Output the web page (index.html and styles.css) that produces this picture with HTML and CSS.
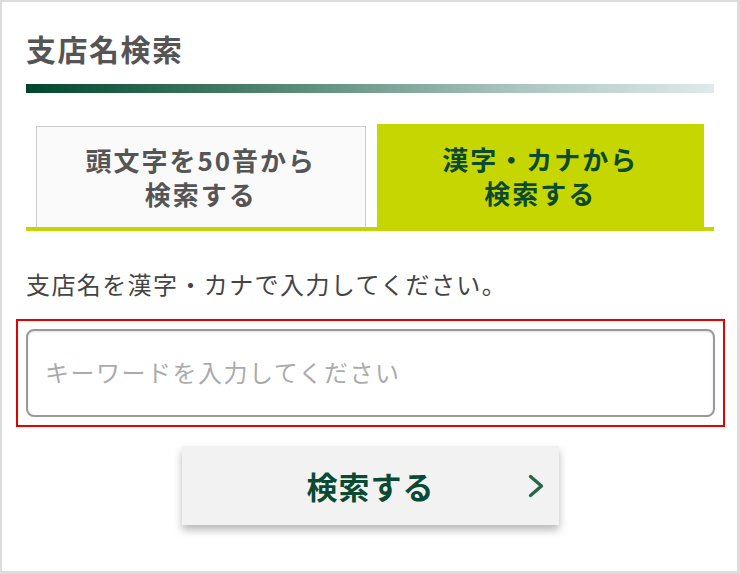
FILE: index.html
```html
<!DOCTYPE html>
<html lang="ja">
<head>
<meta charset="utf-8">
<title>支店名検索</title>
<link rel="stylesheet" href="styles.css">
</head>
<body>
<div class="frame">
  <h1 class="title">支店名検索</h1>
  <div class="title-bar"></div>

  <div class="tabs">
    <div class="tab tab-off">頭文字を50音から<br>検索する</div>
    <div class="tab tab-on">漢字・カナから<br>検索する</div>
  </div>

  <p class="lead">支店名を漢字・カナで入力してください。</p>

  <div class="field-box">
    <input class="field" type="text" placeholder="キーワードを入力してください">
  </div>

  <div class="btn-row">
    <button class="btn" type="button">
      <span class="btn-spacer"></span>
      <span class="btn-label">検索する</span>
      <svg class="btn-chevron" width="16" height="24" viewBox="0 0 16 24" aria-hidden="true">
        <polyline points="2.5,2.5 13.5,12 2.5,21.5" fill="none" stroke="#2b6548" stroke-width="3.4" stroke-linecap="round" stroke-linejoin="round"/>
      </svg>
    </button>
  </div>
</div>
</body>
</html>
```

FILE: styles.css
```css
* {
  box-sizing: border-box;
}

html, body {
  margin: 0;
  padding: 0;
  background: #ffffff;
}

body {
  font-family: "Noto Sans CJK JP", "Noto Sans", sans-serif;
}

.frame {
  width: 740px;
  height: 574px;
  border-style: solid;
  border-color: #dcdcdc;
  border-width: 2px 3px 3px 2px;
  padding: 26px 23px 0 24px;
  overflow: hidden;
}

.title {
  margin: 0;
  font-size: 30px;
  line-height: 40px;
  font-weight: 700;
  letter-spacing: 1.5px;
  color: #555555;
}

.title-bar {
  margin-top: 16px;
  height: 9px;
  background: linear-gradient(to right, #00462c 0%, #4f8470 35%, #a8c3bd 70%, #dfeaea 100%);
}

.tabs {
  margin-top: 31px;
  display: flex;
  align-items: flex-end;
  gap: 11px;
  padding: 0 10px;
  border-bottom: 4px solid #c5d500;
}

.tab {
  flex: 1 1 0;
  display: flex;
  align-items: center;
  justify-content: center;
  text-align: center;
  font-size: 26px;
  line-height: 34px;
  font-weight: 700;
  letter-spacing: 2px;
}

.tab-off {
  height: 101px;
  background: #fafafa;
  border: 1px solid #cccccc;
  border-bottom: none;
  color: #555555;
}

.tab-on {
  height: 103px;
  background: #c5d600;
  color: #0b4a2e;
}

.lead {
  margin: 36px 0 0;
  font-size: 24px;
  line-height: 34px;
  letter-spacing: 1.4px;
  color: #444444;
}

.field-box {
  margin: 18px -11px 0 -10px;
  border: 2px solid #e60000;
  padding: 8px;
}

.field {
  display: block;
  width: 100%;
  height: 88px;
  margin: 0;
  border: 2px solid #999999;
  border-radius: 8px;
  padding: 0 17px 4px;
  font-family: "Noto Sans CJK JP", "Noto Sans", sans-serif;
  font-size: 24px;
  letter-spacing: 1.5px;
  color: #333333;
  background: #ffffff;
  box-shadow: inset 0 1px 2px rgba(0, 0, 0, 0.12);
  outline: none;
}

.field::placeholder {
  color: #ababab;
}

.btn-row {
  margin-top: 19px;
  display: flex;
  justify-content: center;
}

.btn {
  width: 377px;
  height: 79px;
  margin: 0;
  padding: 0 15px 0 16px;
  border: none;
  background: #f2f2f2;
  box-shadow: 0 5px 8px rgba(0, 0, 0, 0.28);
  display: grid;
  grid-template-columns: 1fr auto 1fr;
  align-items: center;
  font-family: "Noto Sans CJK JP", "Noto Sans", sans-serif;
  cursor: pointer;
}

.btn-label {
  font-size: 31px;
  line-height: 40px;
  font-weight: 700;
  letter-spacing: 1px;
  color: #0b4a32;
}

.btn-chevron {
  justify-self: end;
  display: block;
}
```
